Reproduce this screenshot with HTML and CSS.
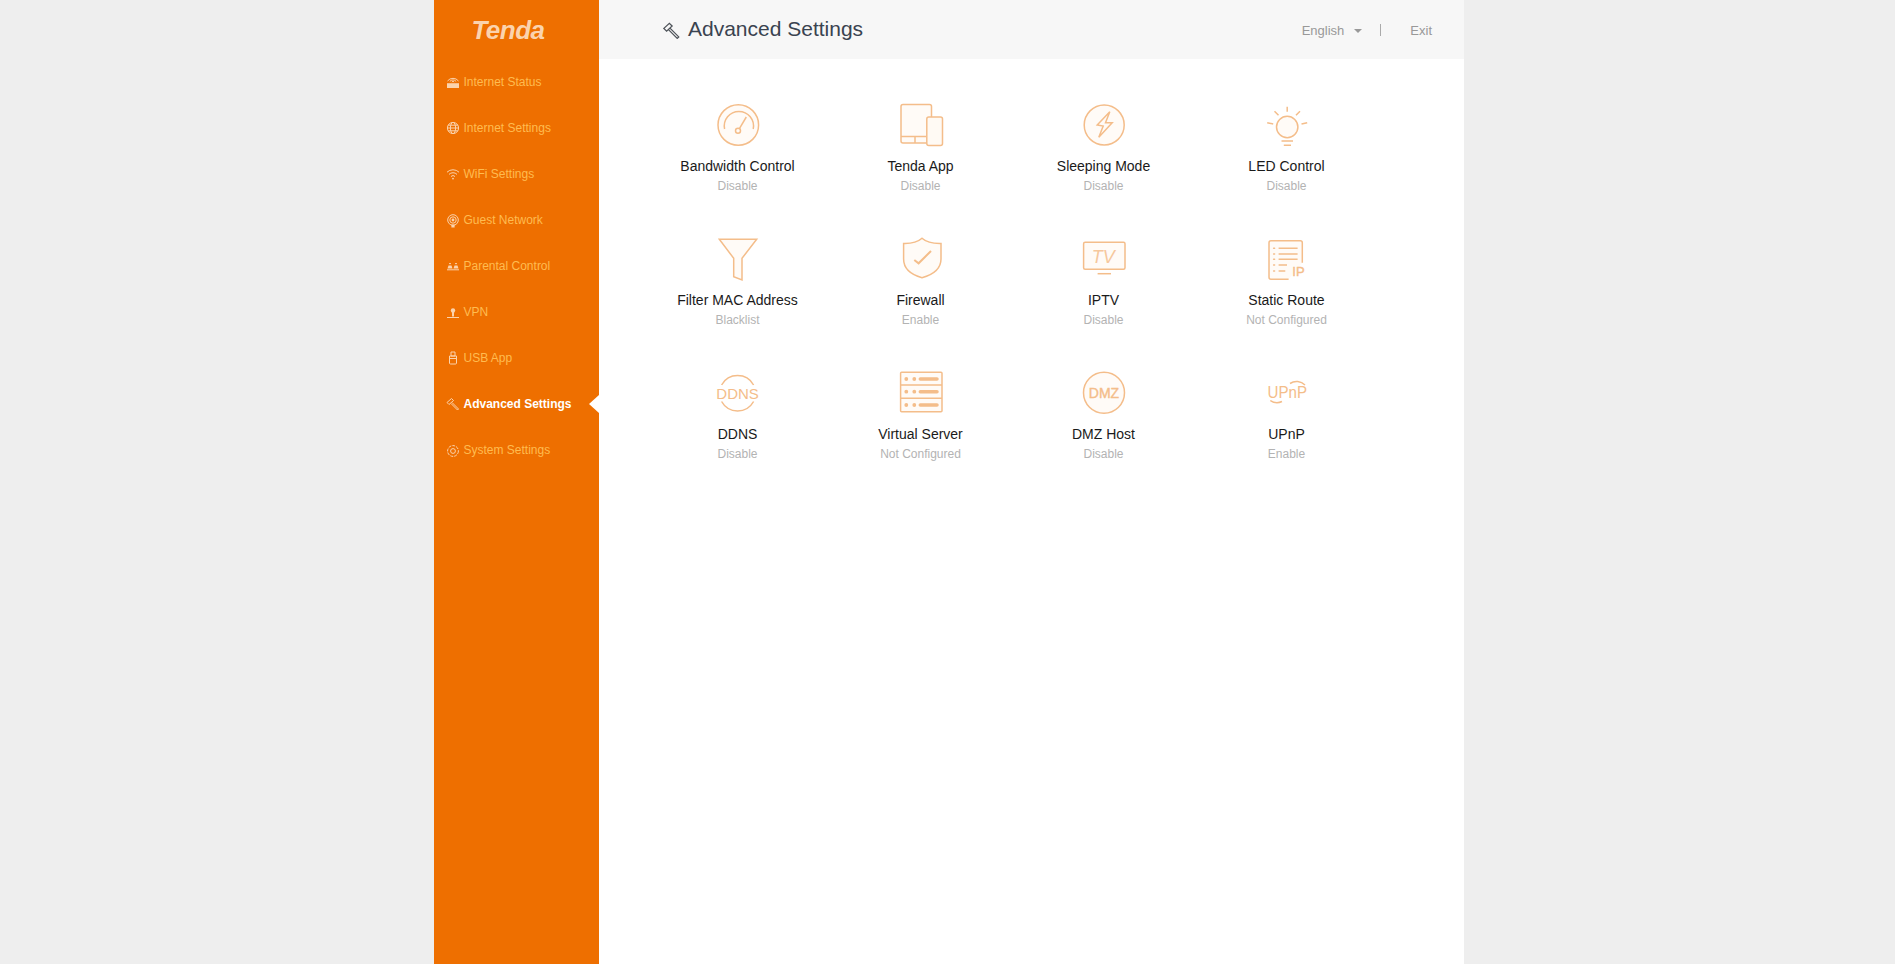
FILE: index.html
```html
<!DOCTYPE html>
<html lang="en">
<head>
  <meta charset="UTF-8">
  <title>Tenda - Advanced Settings</title>
  <link rel="stylesheet" href="styles.css">
</head>
<body>
<div class="wrap">

  <!-- Left menu -->
  <div class="side">
    <div class="logo">Tenda</div>
    <ul class="menu">
      <li class="menu-item">
        <svg class="menu-icon" viewBox="0 0 14 14"><path d="M1.500 6a7 7 0 0 1 11 0M3.800 6.500a4 4 0 0 1 6.400 0M5.800 7a1.600 1.600 0 0 1 2.400 0"/><path class="solid" d="M1 8.200h12V13H1z"/></svg>
        Internet Status
      </li>
      <li class="menu-item">
        <svg class="menu-icon" viewBox="0 0 14 14"><circle cx="7" cy="7" r="5.600"/><ellipse cx="7" cy="7" rx="2.600" ry="5.600"/><path d="M1.400 7h11.200M2.200 4.200h9.600M2.200 9.800h9.600"/></svg>
        Internet Settings
      </li>
      <li class="menu-item">
        <svg class="menu-icon" viewBox="0 0 14 14"><path d="M1 5.200a8.600 8.600 0 0 1 12 0M3 7.400a5.600 5.600 0 0 1 8 0M5 9.500a2.800 2.800 0 0 1 4 0"/><circle class="solid" cx="7" cy="11.600" r=".9"/></svg>
        WiFi Settings
      </li>
      <li class="menu-item">
        <svg class="menu-icon low" viewBox="0 0 14 14"><circle cx="7" cy="6" r="5.300"/><circle cx="7" cy="6" r="3.200"/><circle class="solid" cx="7" cy="6" r="1.400"/><path class="solid" d="M5.400 10.500h3.200V13.500H5.400z"/></svg>
        Guest Network
      </li>
      <li class="menu-item">
        <svg class="menu-icon" viewBox="0 0 14 14"><path class="solid" d="M1.500 9.500 2.500 6.500h3l1 3zM7.500 9.500 8.500 6.500h3l1 3z"/><path d="M3 5a1.200 1.200 0 0 1 2 0M9 5a1.200 1.200 0 0 1 2 0M1 10.800h12"/></svg>
        Parental Control
      </li>
      <li class="menu-item">
        <svg class="menu-icon low" viewBox="0 0 14 14"><circle class="solid" cx="7" cy="4.500" r="2.200"/><path class="solid" d="M6 6h2v4.500H6z"/><path d="M1 11.500h12"/></svg>
        VPN
      </li>
      <li class="menu-item">
        <svg class="menu-icon" viewBox="0 0 14 14"><path d="M5 1h4v4H5zM3.500 5h7v7a1 1 0 0 1-1 1h-5a1 1 0 0 1-1-1zM3.500 7.500h7"/></svg>
        USB App
      </li>
      <li class="menu-item active">
        <svg class="menu-icon" viewBox="0 0 14 14"><path d="M1 5.500 5.500 1.500 7.500 3.500 3 7.500zM6 5.500l6.500 6.500-1 1L5 6.500"/></svg>
        Advanced Settings
      </li>
      <li class="menu-item">
        <svg class="menu-icon low" viewBox="0 0 14 14"><circle cx="7" cy="7" r="2.400"/><circle class="dash" cx="7" cy="7" r="5.400"/></svg>
        System Settings
      </li>
    </ul>
  </div>

  <div class="main">
    <div class="head">
      <svg class="head-icon" viewBox="0 0 16 16"><path d="M.8 6 6 1.200 8.600 3.800 3.400 8.600zM6.800 6l8 8-1.400 1.400-8-8"/></svg>
      <h1 class="title">Advanced Settings</h1>
      <span class="lang">English</span>
      <span class="caret"></span>
      <span class="sep"></span>
      <span class="exit">Exit</span>
    </div>

    <div class="grid">
      <div class="cell">
        <svg class="ico" viewBox="0 0 50 50"><circle class="tint" cx="25.300" cy="25" r="20.300"/><path d="M11.600 29a14.600 14.600 0 1 1 28.600 0"/><circle cx="25" cy="30.700" r="2.500"/><path d="M26.400 28.600 33.300 17"/></svg>
        <div class="name">Bandwidth Control</div>
        <div class="val">Disable</div>
      </div>
      <div class="cell">
        <svg class="ico" viewBox="0 0 50 50"><rect class="tint" x="5" y="4.500" width="30.500" height="38.500" rx="2"/><path d="M5 36.500h25M19 36.500v6.500"/><rect class="phone" x="30.800" y="17" width="15.700" height="28.500" rx="2"/></svg>
        <div class="name">Tenda App</div>
        <div class="val">Disable</div>
      </div>
      <div class="cell">
        <svg class="ico" viewBox="0 0 50 50"><circle class="tint" cx="25.200" cy="25" r="20"/><path d="M30.800 11.700 18.200 25l6 1-4.400 11.300 13.400-14.600h-6.700z"/></svg>
        <div class="name">Sleeping Mode</div>
        <div class="val">Disable</div>
      </div>
      <div class="cell">
        <svg class="ico" viewBox="0 0 50 50"><circle class="tint" cx="25.200" cy="27" r="10.700"/><path d="M25.200 6.700v5M12.500 11.300l4 4M38 11.300l-4 4M5.200 22.700l6 1.300M45.200 22.700l-5.700 1.300M19.500 41H31M21.800 45.300H29"/></svg>
        <div class="name">LED Control</div>
        <div class="val">Disable</div>
      </div>

      <div class="cell">
        <svg class="ico" viewBox="0 0 50 50"><path class="tint" d="M6.300 5.300h37.400L29 24.300V46l-8.300-3.300V24.300z"/></svg>
        <div class="name">Filter MAC Address</div>
        <div class="val">Blacklist</div>
      </div>
      <div class="cell">
        <svg class="ico" viewBox="0 0 50 50"><path class="tint" d="M26 4.300c4 3.600 10.500 5.400 19 5.200V25c0 9.500-7.500 15.500-19 18.700C14.500 40.500 7.600 34.500 7.600 25V9.500C15.500 9.700 22 7.900 26 4.300z"/><path class="check" d="M18.300 26l4.300 3.300L35 17"/></svg>
        <div class="name">Firewall</div>
        <div class="val">Enable</div>
      </div>
      <div class="cell">
        <svg class="ico" viewBox="0 0 50 50"><rect class="tint" x="4.600" y="8.300" width="41.400" height="27" rx="1.500"/><path d="M18.600 39.700H32"/><text class="ico-text tv" x="24.300" y="28.500" text-anchor="middle">TV</text></svg>
        <div class="name">IPTV</div>
        <div class="val">Disable</div>
      </div>
      <div class="cell">
        <svg class="ico" viewBox="0 0 50 50"><path class="tint" d="M26.600 45.300H9a2 2 0 0 1-2-2V8.700a2 2 0 0 1 2-2h29.300a2 2 0 0 1 2 2v20"/><path d="M16.600 14.300h19M16.600 20h19M16.600 25.300h19M16.600 31H25M16.600 37h6.700"/><path class="dots" d="M11.600 14.300h1M11.600 20h1M11.600 25.300h1M11.600 31h1M11.600 37h1"/><text class="ico-text heavy" x="30.300" y="42" font-size="13">IP</text></svg>
        <div class="name">Static Route</div>
        <div class="val">Not Configured</div>
      </div>

      <div class="cell">
        <svg class="ico" viewBox="0 0 50 50"><path d="M8.600 17a18.300 18.300 0 0 1 32 0M8.600 33.500a18.300 18.300 0 0 0 32 0"/><text class="ico-text" x="24.600" y="30.600" font-size="15" text-anchor="middle">DDNS</text></svg>
        <div class="name">DDNS</div>
        <div class="val">Disable</div>
      </div>
      <div class="cell">
        <svg class="ico" viewBox="0 0 50 50"><rect class="tint" x="4.600" y="4.300" width="41.400" height="39.400" rx="1"/><path d="M4.600 17H46M4.600 30.300H46"/><path class="bars" d="M24.300 11H41M24.300 23.700H41M24.300 37H41"/><g class="fill"><circle cx="10.300" cy="11" r="1.900"/><circle cx="18.300" cy="11" r="1.900"/><circle cx="10.300" cy="23.700" r="1.900"/><circle cx="18.300" cy="23.700" r="1.900"/><circle cx="10.300" cy="37" r="1.900"/><circle cx="18.300" cy="37" r="1.900"/></g></svg>
        <div class="name">Virtual Server</div>
        <div class="val">Not Configured</div>
      </div>
      <div class="cell">
        <svg class="ico" viewBox="0 0 50 50"><circle class="tint" cx="25" cy="24.700" r="20.500"/><text class="ico-text heavy" x="25" y="29.700" font-size="14" text-anchor="middle">DMZ</text></svg>
        <div class="name">DMZ Host</div>
        <div class="val">Disable</div>
      </div>
      <div class="cell">
        <svg class="ico" viewBox="0 0 50 50"><path d="M28 15.500a12 12 0 0 1 15 1.500M8.300 32.500a12 12 0 0 0 11.700 1"/><text class="ico-text" x="5.600" y="30.300" font-size="17" textLength="39.500" lengthAdjust="spacingAndGlyphs">UPnP</text></svg>
        <div class="name">UPnP</div>
        <div class="val">Enable</div>
      </div>
    </div>
  </div>
</div>
</body>
</html>
```
FILE: styles.css
```css
html, body {
  margin: 0;
  height: 100%;
  overflow: hidden;
}

body {
  background-color: #eeeeee;
  font-family: "Liberation Sans", Arial, sans-serif;
}

.wrap {
  display: flex;
  width: 1030px;
  height: 100%;
  margin-left: 434px;
  background-color: #fff;
}

/* Left menu */
.side {
  flex: 0 0 165px;
  background-color: #ee6f00;
}

.logo {
  height: 59px;
  box-sizing: border-box;
  padding: 15px 17px 0 0;
  text-align: center;
  font-size: 26px;
  line-height: 30px;
  font-weight: bold;
  font-style: italic;
  letter-spacing: -.5px;
  color: #fbd3ad;
}

.menu {
  list-style: none;
  margin: 0;
  padding: 0;
}

.menu-item {
  position: relative;
  display: flex;
  align-items: center;
  gap: 3.500px;
  height: 46px;
  padding-left: 12px;
  font-size: 12px;
  color: #ffbc50;
}

.menu-item.active {
  font-weight: bold;
  color: #fff;
}

/* White arrow pointing at the content */
.menu-item.active::after {
  content: "";
  position: absolute;
  right: 0;
  top: 14px;
  border-style: solid;
  border-width: 9px 10px 9px 0;
  border-color: transparent #fff transparent transparent;
}

.menu-icon {
  width: 14px;
  height: 14px;
  fill: none;
  stroke: #fbd3ad;
  stroke-width: 1;
}

.menu-icon.low {
  margin-top: 2px;
}

.menu-icon .solid {
  fill: #fbd3ad;
  stroke: none;
}

.menu-icon .dash {
  stroke-dasharray: 3 1;
}

/* Header */
.main {
  flex: 1;
  min-width: 0;
}

.head {
  display: flex;
  align-items: center;
  height: 59px;
  padding: 0 32px 0 64px;
  background-color: #f7f7f7;
}

.head-icon {
  width: 17px;
  height: 17px;
  margin-top: 2px;
  fill: none;
  stroke: #4d5258;
  stroke-width: 1.200;
}

.title {
  flex: 1;
  margin: 0 0 1px 8px;
  font-size: 21px;
  font-weight: normal;
  color: #3a4350;
}

.lang,
.exit {
  font-size: 13px;
  margin-top: 1px;
  color: #999;
}

.caret {
  margin: 2px 0 0 10px;
  border-style: solid;
  border-width: 4px 4px 0;
  border-color: #999 transparent transparent;
}

.sep {
  width: 1px;
  height: 12px;
  margin: 1px 29px 0 18px;
  background-color: #aaa;
}

/* Feature grid */
.grid {
  display: grid;
  grid-template-columns: repeat(4, 183px);
  grid-auto-rows: 134px;
  padding: 41px 0 0 47px;
}

.cell {
  display: flex;
  flex-direction: column;
  align-items: center;
}

.ico {
  display: block;
  width: 50px;
  height: 50px;
  fill: none;
  stroke: #f4bd8a;
  stroke-width: 1.500;
}

.ico .tint {
  fill: #fffbf7;
}

.ico .phone {
  fill: #fffaf4;
}

.ico .check {
  stroke-width: 2;
}

.ico .bars {
  stroke-width: 3.500;
  stroke-linecap: round;
}

.ico .dots {
  stroke-linecap: round;
}

.ico .fill {
  fill: #f4bd8a;
  stroke: none;
}

.ico-text {
  fill: #f4bd8a;
  stroke: none;
  font-family: "Liberation Sans", Arial, sans-serif;
}

.ico-text.heavy {
  stroke: #f4bd8a;
  stroke-width: .4;
}

.ico-text.tv {
  font-size: 18px;
  font-style: italic;
  fill: #f6c89d;
}

.name {
  margin-top: 8px;
  font-size: 14px;
  line-height: 16px;
  color: #1a1a1a;
}

.val {
  margin-top: 5px;
  font-size: 12px;
  line-height: 15px;
  color: #b3b3b3;
}
```
